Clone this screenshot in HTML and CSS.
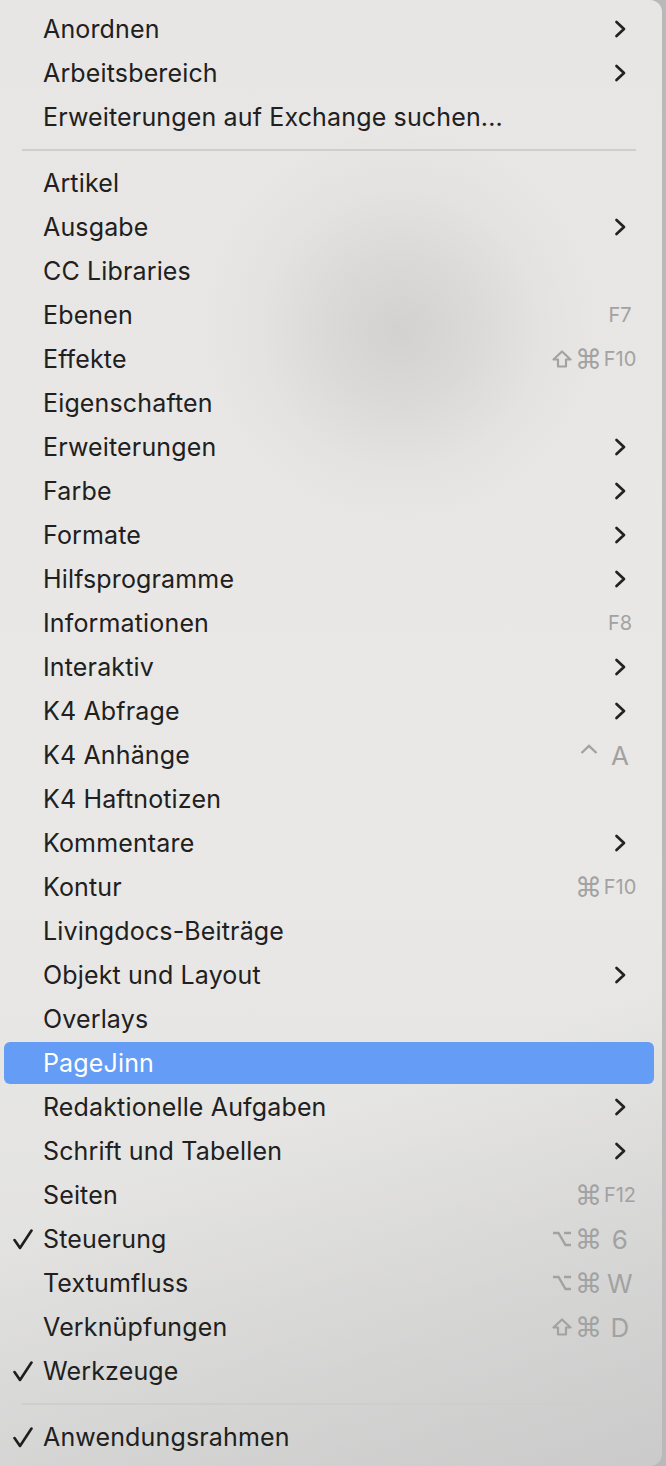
FILE: index.html
```html
<!DOCTYPE html>
<html lang="de">
<head>
<meta charset="utf-8">
<title>Menü</title>
<link rel="stylesheet" href="styles.css">
</head>
<body>
<div class="menu">
  <div class="item"><span class="check"></span><span class="label">Anordnen</span><span class="key"><svg class="chev" viewBox="0 0 12 18"><path d="M2.5 2 L10 9 L2.5 16"/></svg></span></div>
  <div class="item"><span class="check"></span><span class="label">Arbeitsbereich</span><span class="key"><svg class="chev" viewBox="0 0 12 18"><path d="M2.5 2 L10 9 L2.5 16"/></svg></span></div>
  <div class="item"><span class="check"></span><span class="label">Erweiterungen auf Exchange suchen...</span></div>
  <div class="sep"></div>
  <div class="item"><span class="check"></span><span class="label">Artikel</span></div>
  <div class="item"><span class="check"></span><span class="label">Ausgabe</span><span class="key"><svg class="chev" viewBox="0 0 12 18"><path d="M2.5 2 L10 9 L2.5 16"/></svg></span></div>
  <div class="item"><span class="check"></span><span class="label">CC Libraries</span></div>
  <div class="item"><span class="check"></span><span class="label">Ebenen</span><span class="key fkey">F7</span></div>
  <div class="item"><span class="check"></span><span class="label">Effekte</span><span class="mods"><span class="mod"><svg class="shift" viewBox="0 0 20 18"><path d="M10 1.5 L18.5 9.5 L14 9.5 L14 16.5 L6 16.5 L6 9.5 L1.5 9.5 Z"/></svg></span><span class="mod cmd">⌘</span></span><span class="key fkey">F10</span></div>
  <div class="item"><span class="check"></span><span class="label">Eigenschaften</span></div>
  <div class="item"><span class="check"></span><span class="label">Erweiterungen</span><span class="key"><svg class="chev" viewBox="0 0 12 18"><path d="M2.5 2 L10 9 L2.5 16"/></svg></span></div>
  <div class="item"><span class="check"></span><span class="label">Farbe</span><span class="key"><svg class="chev" viewBox="0 0 12 18"><path d="M2.5 2 L10 9 L2.5 16"/></svg></span></div>
  <div class="item"><span class="check"></span><span class="label">Formate</span><span class="key"><svg class="chev" viewBox="0 0 12 18"><path d="M2.5 2 L10 9 L2.5 16"/></svg></span></div>
  <div class="item"><span class="check"></span><span class="label">Hilfsprogramme</span><span class="key"><svg class="chev" viewBox="0 0 12 18"><path d="M2.5 2 L10 9 L2.5 16"/></svg></span></div>
  <div class="item"><span class="check"></span><span class="label">Informationen</span><span class="key fkey">F8</span></div>
  <div class="item"><span class="check"></span><span class="label">Interaktiv</span><span class="key"><svg class="chev" viewBox="0 0 12 18"><path d="M2.5 2 L10 9 L2.5 16"/></svg></span></div>
  <div class="item"><span class="check"></span><span class="label">K4 Abfrage</span><span class="key"><svg class="chev" viewBox="0 0 12 18"><path d="M2.5 2 L10 9 L2.5 16"/></svg></span></div>
  <div class="item"><span class="check"></span><span class="label">K4 Anhänge</span><span class="mods"><span class="mod"><svg class="caret" viewBox="0 0 18 10"><path d="M1.5 9 L9 1.8 L16.5 9"/></svg></span></span><span class="key">A</span></div>
  <div class="item"><span class="check"></span><span class="label">K4 Haftnotizen</span></div>
  <div class="item"><span class="check"></span><span class="label">Kommentare</span><span class="key"><svg class="chev" viewBox="0 0 12 18"><path d="M2.5 2 L10 9 L2.5 16"/></svg></span></div>
  <div class="item"><span class="check"></span><span class="label">Kontur</span><span class="mods"><span class="mod cmd">⌘</span></span><span class="key fkey">F10</span></div>
  <div class="item"><span class="check"></span><span class="label">Livingdocs-Beiträge</span></div>
  <div class="item"><span class="check"></span><span class="label">Objekt und Layout</span><span class="key"><svg class="chev" viewBox="0 0 12 18"><path d="M2.5 2 L10 9 L2.5 16"/></svg></span></div>
  <div class="item"><span class="check"></span><span class="label">Overlays</span></div>
  <div class="item active"><span class="check"></span><span class="label">PageJinn</span></div>
  <div class="item"><span class="check"></span><span class="label">Redaktionelle Aufgaben</span><span class="key"><svg class="chev" viewBox="0 0 12 18"><path d="M2.5 2 L10 9 L2.5 16"/></svg></span></div>
  <div class="item"><span class="check"></span><span class="label">Schrift und Tabellen</span><span class="key"><svg class="chev" viewBox="0 0 12 18"><path d="M2.5 2 L10 9 L2.5 16"/></svg></span></div>
  <div class="item"><span class="check"></span><span class="label">Seiten</span><span class="mods"><span class="mod cmd">⌘</span></span><span class="key fkey">F12</span></div>
  <div class="item"><span class="check"><svg viewBox="0 0 20 21"><path d="M1.5 11 L7 19 L18.5 1.5"/></svg></span><span class="label">Steuerung</span><span class="mods"><span class="mod"><svg class="opt" viewBox="0 0 20 16"><path d="M1 2 L6.5 2 L13.5 14 L19 14 M12 2 L19 2"/></svg></span><span class="mod cmd">⌘</span></span><span class="key">6</span></div>
  <div class="item"><span class="check"></span><span class="label">Textumfluss</span><span class="mods"><span class="mod"><svg class="opt" viewBox="0 0 20 16"><path d="M1 2 L6.5 2 L13.5 14 L19 14 M12 2 L19 2"/></svg></span><span class="mod cmd">⌘</span></span><span class="key">W</span></div>
  <div class="item"><span class="check"></span><span class="label">Verknüpfungen</span><span class="mods"><span class="mod"><svg class="shift" viewBox="0 0 20 18"><path d="M10 1.5 L18.5 9.5 L14 9.5 L14 16.5 L6 16.5 L6 9.5 L1.5 9.5 Z"/></svg></span><span class="mod cmd">⌘</span></span><span class="key">D</span></div>
  <div class="item"><span class="check"><svg viewBox="0 0 20 21"><path d="M1.5 11 L7 19 L18.5 1.5"/></svg></span><span class="label">Werkzeuge</span></div>
  <div class="sep"></div>
  <div class="item"><span class="check"><svg viewBox="0 0 20 21"><path d="M1.5 11 L7 19 L18.5 1.5"/></svg></span><span class="label">Anwendungsrahmen</span></div>
</div>
</body>
</html>
```
FILE: styles.css
```css
html, body {
  margin: 0;
  padding: 0;
}
body {
  width: 666px;
  height: 1466px;
  overflow: hidden;
  background: #b9b9b9;
  font-family: Inter, "Noto Sans", "DejaVu Sans", sans-serif;
}
.menu {
  display: flex;
  flex-direction: column;
  width: 662px;
  height: 1466px;
  box-sizing: border-box;
  padding-top: 7px;
  border-radius: 0 12px 12px 0;
  background:
    radial-gradient(circle at 400px 330px, rgba(205,204,203,0.8) 0, rgba(208,207,206,0.55) 75px, rgba(215,214,213,0.25) 140px, rgba(232,231,229,0) 200px),
    linear-gradient(160deg, rgba(233,232,230,0) 0, rgba(233,232,230,0) 72%, rgba(200,200,200,0.9) 100%),
    linear-gradient(180deg, #e7e6e4 0, #e9e8e6 60%, #e0e0df 100%);
}
.item {
  display: flex;
  align-items: center;
  flex: none;
  height: 42px;
  margin: 1px 8px 1px 4px;
  padding: 0 16px 0 9px;
  border-radius: 6px;
  color: #202020;
  font-size: 25px;
  letter-spacing: 0.15px;
}
.item.active {
  background: #659cf5;
  color: #fff;
}
.check {
  width: 30px;
  height: 21px;
  display: flex;
  align-items: center;
}
.check svg {
  width: 20px;
  height: 21px;
  fill: none;
  stroke: #1e1e1e;
  stroke-width: 2.6;
  stroke-linecap: round;
  stroke-linejoin: round;
}
.label {
  flex: 1;
  white-space: nowrap;
}
.mods {
  display: flex;
  justify-content: flex-end;
  color: #a2a2a2;
}
.mod {
  width: 27px;
  height: 30px;
  display: flex;
  justify-content: center;
  align-items: center;
}
.mod.cmd {
  font-family: "DejaVu Sans", sans-serif;
  font-size: 27px;
  line-height: 1;
}
.shift {
  width: 20px;
  height: 18px;
  fill: none;
  stroke: #a2a2a2;
  stroke-width: 2.2;
  stroke-linejoin: round;
}
.opt {
  width: 20px;
  height: 16px;
  fill: none;
  stroke: #a2a2a2;
  stroke-width: 2.4;
}
.caret {
  width: 18px;
  height: 10px;
  fill: none;
  stroke: #a2a2a2;
  stroke-width: 2.4;
  margin-top: -12px;
}
.key {
  width: 36px;
  display: flex;
  justify-content: center;
  align-items: center;
  color: #a2a2a2;
  font-size: 26px;
}
.key.fkey {
  font-size: 20px;
  letter-spacing: 0;
}
.chev {
  width: 12px;
  height: 18px;
  fill: none;
  stroke: #222;
  stroke-width: 2.7;
  stroke-linecap: round;
  stroke-linejoin: round;
}
.sep {
  flex: none;
  height: 2px;
  margin: 10px 26px 10px 22px;
  background: #cfcecc;
}
```
